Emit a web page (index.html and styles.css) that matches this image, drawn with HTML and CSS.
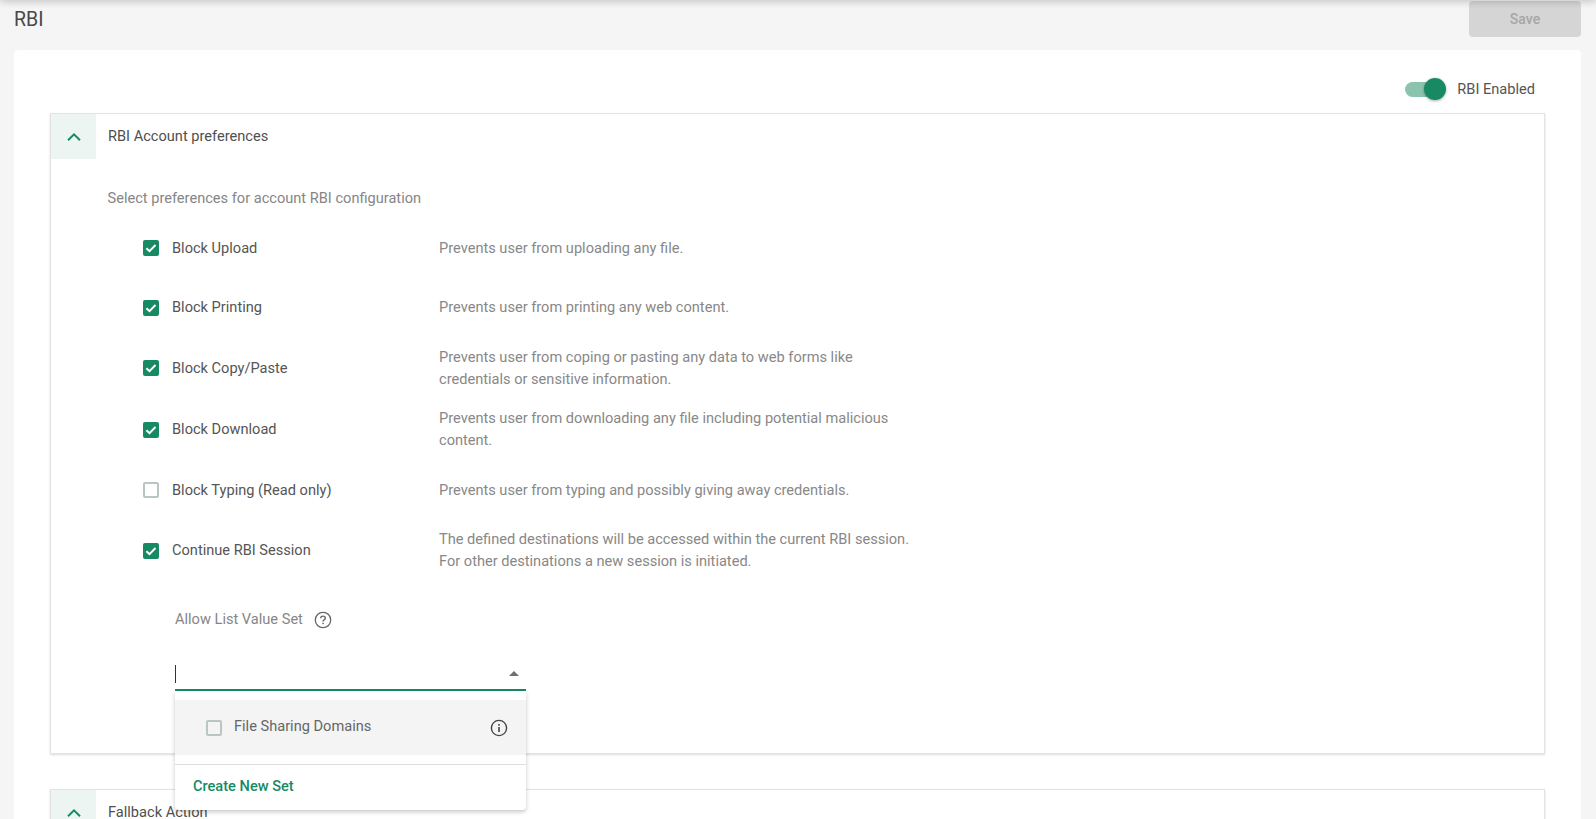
FILE: index.html
```html
<!DOCTYPE html>
<html lang="en">
<head>
<meta charset="utf-8">
<title>RBI</title>
<link rel="stylesheet" href="styles.css">
</head>
<body>
<div class="topshadow"></div>
<header class="pagehead">
  <h1 class="pagetitle">RBI</h1>
  <button class="savebtn" disabled>Save</button>
</header>
<main class="card">
  <div class="togglerow">
    <span class="toggle"><span class="track"></span><span class="knob"></span></span>
    <span class="togglelabel">RBI Enabled</span>
  </div>
  <section class="panel first">
    <div class="panelhead">
      <span class="chev"><svg width="18" height="18" viewBox="0 0 18 18"><path d="M3 12.2 9 6.3l6 5.9" fill="none" stroke="#178a64" stroke-width="2"/></svg></span>
      <span class="paneltitle">RBI Account preferences</span>
    </div>
    <div class="panelbody">
      <p class="intro">Select preferences for account RBI configuration</p>
      <div class="rows">
        <div class="row tight2"><span class="cb on"><svg width="16" height="16" viewBox="0 0 16 16"><path d="M3.4 8.2l3.1 3 6-6.2" fill="none" stroke="#fff" stroke-width="2"/></svg></span><span class="rowlabel">Block Upload</span><span class="rowdesc">Prevents user from uploading any file.</span></div>
        <div class="row nudge"><span class="cb on"><svg width="16" height="16" viewBox="0 0 16 16"><path d="M3.4 8.2l3.1 3 6-6.2" fill="none" stroke="#fff" stroke-width="2"/></svg></span><span class="rowlabel">Block Printing</span><span class="rowdesc">Prevents user from printing any web content.</span></div>
        <div class="row"><span class="cb on"><svg width="16" height="16" viewBox="0 0 16 16"><path d="M3.4 8.2l3.1 3 6-6.2" fill="none" stroke="#fff" stroke-width="2"/></svg></span><span class="rowlabel">Block Copy/Paste</span><span class="rowdesc">Prevents user from coping or pasting any data to web forms like credentials or sensitive information.</span></div>
        <div class="row nudge"><span class="cb on"><svg width="16" height="16" viewBox="0 0 16 16"><path d="M3.4 8.2l3.1 3 6-6.2" fill="none" stroke="#fff" stroke-width="2"/></svg></span><span class="rowlabel">Block Download</span><span class="rowdesc">Prevents user from downloading any file including potential malicious content.</span></div>
        <div class="row tight1"><span class="cb off"></span><span class="rowlabel">Block Typing (Read only)</span><span class="rowdesc">Prevents user from typing and possibly giving away credentials.</span></div>
        <div class="row nudge"><span class="cb on"><svg width="16" height="16" viewBox="0 0 16 16"><path d="M3.4 8.2l3.1 3 6-6.2" fill="none" stroke="#fff" stroke-width="2"/></svg></span><span class="rowlabel">Continue RBI Session</span><span class="rowdesc">The defined destinations will be accessed within the current RBI session. For other destinations a new session is initiated.</span></div>
      </div>
      <div class="allow">
        <div class="allowhead">
          <span class="allowlabel">Allow List Value Set</span>
          <svg class="helpicon" width="18" height="18" viewBox="0 0 18 18"><circle cx="9" cy="9" r="7.7" fill="none" stroke="#666" stroke-width="1.3"/><path d="M6.7 7.3c0-1.4 1-2.2 2.3-2.2s2.3.8 2.3 2.1c0 1.7-2.3 1.6-2.3 3.4" fill="none" stroke="#666" stroke-width="1.4"/><rect x="8.3" y="11.7" width="1.5" height="1.5" fill="#666"/></svg>
        </div>
        <div class="select">
          <span class="caret"></span>
          <span class="arrow"></span>
        </div>
        <div class="dropdown">
          <div class="option">
            <span class="cb off"></span>
            <span class="optlabel">File Sharing Domains</span>
            <svg class="infoicon" width="18" height="18" viewBox="0 0 18 18"><circle cx="9" cy="9" r="7.6" fill="none" stroke="#444" stroke-width="1.4"/><rect x="8.2" y="8" width="1.6" height="5" fill="#444"/><rect x="8.2" y="5" width="1.6" height="1.7" fill="#444"/></svg>
          </div>
          <div class="dropfoot"><span class="createlink">Create New Set</span></div>
        </div>
      </div>
    </div>
  </section>
  <section class="panel">
    <div class="panelhead">
      <span class="chev"><svg width="18" height="18" viewBox="0 0 18 18"><path d="M3 12.2 9 6.3l6 5.9" fill="none" stroke="#178a64" stroke-width="2"/></svg></span>
      <span class="paneltitle">Fallback Action</span>
    </div>
  </section>
</main>
</body>
</html>
```
FILE: styles.css
```css
* { box-sizing: border-box; }
html, body { margin: 0; height: 819px; overflow: hidden; }
body {
  background: #f5f5f5;
  font-family: Roboto, "Liberation Sans", sans-serif;
  font-size: 14.6px;
  color: #4a4a4a;
  position: relative;
}
.topshadow {
  position: absolute; top: -6px; left: 0; right: 0; height: 6px;
  box-shadow: 0 0 8px rgba(0,0,0,.32);
}
.pagehead {
  display: flex; justify-content: space-between; align-items: flex-start;
  padding: 1px 15px 0 14px; height: 50px;
}
.pagetitle { margin: 5px 0 0; font-size: 19.5px; line-height: 28px; font-weight: 400; color: #484848; }
.savebtn {
  width: 112px; height: 36px; border: 0; border-radius: 4px;
  background: #d5d5d5; color: #a6a6a6;
  font: 500 14px Roboto, sans-serif;
}
.card {
  margin: 0 15px 0 14px; background: #fff; border-radius: 4px 4px 0 0;
  padding: 21px 36px 0 36px; height: 769px; overflow: hidden;
}
.togglerow { display: flex; justify-content: flex-end; align-items: center; height: 36px; margin-bottom: 6px; padding-right: 10px; gap: 10px; }
.toggle { position: relative; display: block; width: 42px; height: 24px; }
.track { position: absolute; left: 0; top: 5px; width: 36px; height: 15px; border-radius: 8px; background: #8bc4ae; }
.knob { position: absolute; left: 19px; top: 1px; width: 22px; height: 22px; border-radius: 50%; background: #178a64; box-shadow: 0 1px 3px rgba(0,0,0,.35); }
.togglelabel { color: #555; line-height: 20px; }
.panel { background: #fff; border: 1px solid #e3e3e3; box-shadow: 0 1px 2px rgba(0,0,0,.14); margin-bottom: 35px; }
.panelhead { display: flex; align-items: center; height: 45px; }
.chev { width: 45px; height: 45px; background: #ecf5f1; display: flex; align-items: center; justify-content: center; }
.paneltitle { margin-left: 12px; color: #4f4f4f; line-height: 20px; margin-top: -2px; }
.panelbody { padding: 0 0 0 57px; height: 594px; position: relative; }
.intro { margin: 0 0 0 -0.5px; padding-top: 28px; line-height: 22px; color: #868686; }
.rows { display: flex; flex-direction: column; gap: 17px; padding-top: 17px; margin-left: 35px; }
.row { display: grid; grid-template-columns: 16px 254px 472px; column-gap: 13px; align-items: center; min-height: 44px; }
.row.tight2 { margin-bottom: -2px; }
.row.tight1 { margin-bottom: -1px; }
.row.nudge .cb { margin-top: 2px; }
.cb { display: block; width: 16px; height: 16px; border-radius: 2px; }
.cb.on { background: #178a64; }
.cb.off { border: 2px solid #b9c7c3; }
.cb svg { display: block; }
.rowlabel { color: #555; line-height: 20px; }
.rowdesc { color: #888; line-height: 22px; }
.allow { margin-left: 67px; position: relative; padding-top: 36px; width: 351px; }
.allowhead { display: flex; align-items: center; gap: 11px; height: 22px; }
.allowlabel { color: #868686; margin-top: -1px; }
.helpicon { margin-top: 2px; }
.select { position: relative; height: 61px; border-bottom: 2px solid #178a64; }
.caret { position: absolute; left: 0; top: 35px; width: 1px; height: 18px; background: #333; }
.arrow { position: absolute; right: 7px; top: 41px; border-left: 5px solid transparent; border-right: 5px solid transparent; border-bottom: 5px solid #6f6f6f; }
.dropdown {
  position: absolute; left: 0; top: 119px; width: 351px; height: 119px; background: #fff;
  border-radius: 0 0 4px 4px; box-shadow: 0 2px 4px rgba(0,0,0,.22); padding-top: 9px; z-index: 2;
}
.option { height: 55px; background: #f4f4f4; display: flex; align-items: center; padding: 0 18px 0 31px; }
.optlabel { margin-left: 12px; flex: 1; color: #666; margin-top: -3px; }
.dropfoot { margin-top: 9px; border-top: 1px solid #dedede; padding: 11px 18px; line-height: 20px; }
.createlink { color: #178a64; font-weight: 500; }
```
